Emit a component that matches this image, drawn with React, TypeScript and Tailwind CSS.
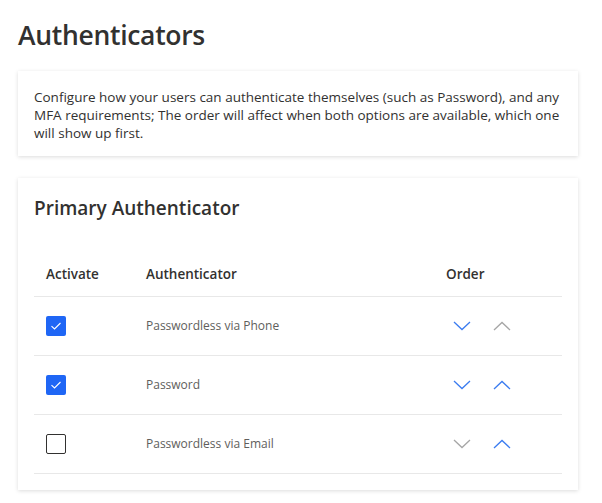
import { useState } from "react";

interface AuthRow {
  id: number;
  name: string;
  active: boolean;
}

const initialRows: AuthRow[] = [
  { id: 1, name: "Passwordless via Phone", active: true },
  { id: 2, name: "Password", active: true },
  { id: 3, name: "Passwordless via Email", active: false },
];

const Chevron = ({ up, enabled }: { up?: boolean; enabled: boolean }) => (
  <svg
    width="18"
    height="10"
    viewBox="0 0 18 10"
    fill="none"
    className={enabled ? "text-[#3b7cf0]" : "text-[#a6a6a6]"}
  >
    <path
      d={up ? "M1 9 L9 1.5 L17 9" : "M1 1 L9 8.5 L17 1"}
      stroke="currentColor"
      strokeWidth="1.3"
    />
  </svg>
);

const App = () => {
  const [rows, setRows] = useState<AuthRow[]>(initialRows);

  const toggle = (id: number) => {
    setRows(rows.map((r) => (r.id === id ? { ...r, active: !r.active } : r)));
  };

  const move = (index: number, dir: number) => {
    const next = [...rows];
    const target = index + dir;
    if (target < 0 || target >= next.length) return;
    [next[index], next[target]] = [next[target], next[index]];
    setRows(next);
  };

  return (
    <div className="min-h-screen bg-white pl-[18px] pr-[24px] pt-[16px] font-['Open_Sans',sans-serif] text-[#323130]">
      <h1 className="text-[26.5px] font-semibold leading-[38px] tracking-[-0.3px]">
        Authenticators
      </h1>

      {/* Description card */}
      <div className="mt-[17px] bg-white px-[16px] pt-[17px] pb-[14px] shadow-[0_1px_4px_rgba(0,0,0,0.14)]">
        <p className="text-[13.5px] leading-[18px] text-[#323130]">
          Configure how your users can authenticate themselves (such as Password), and any
          MFA requirements; The order will affect when both options are available, which one
          will show up first.
        </p>
      </div>

      {/* Primary authenticator card */}
      <div className="mt-[22px] bg-white px-[16px] pt-[16px] pb-[16px] shadow-[0_1px_4px_rgba(0,0,0,0.14)]">
        <h2 className="text-[19px] font-semibold leading-[28px]">Primary Authenticator</h2>

        <div className="mt-[31px]">
          <div className="grid h-[44px] grid-cols-[100px_300px_1fr] items-center border-b border-[#e8e8e8] text-[13.5px] font-semibold">
            <div className="pl-[12px]">Activate</div>
            <div className="pl-[12px]">Authenticator</div>
            <div className="pl-[12px]">Order</div>
          </div>

          {rows.map((row, i) => (
            <div
              key={row.id}
              className="grid h-[59px] grid-cols-[100px_300px_1fr] items-center border-b border-[#e8e8e8]"
            >
              <div className="pl-[12px]">
                <button
                  onClick={() => toggle(row.id)}
                  className={`flex h-[20px] w-[20px] items-center justify-center rounded-[2px] ${
                    row.active ? "bg-[#1f66f5]" : "border border-[#323130] bg-white"
                  }`}
                >
                  {row.active && (
                    <svg width="12" height="10" viewBox="0 0 12 10" fill="none">
                      <path d="M1.5 5.2 L4.5 8 L10.5 2" stroke="white" strokeWidth="1.1" />
                    </svg>
                  )}
                </button>
              </div>
              <div className="pl-[12px] text-[12px] text-[#605e5c]">{row.name}</div>
              <div className="flex items-center gap-[22px] pl-[19px]">
                <button onClick={() => move(i, 1)} className="flex">
                  <Chevron enabled={i < rows.length - 1} />
                </button>
                <button onClick={() => move(i, -1)} className="flex">
                  <Chevron up enabled={i > 0} />
                </button>
              </div>
            </div>
          ))}
        </div>
      </div>
    </div>
  );
};

export default App;
